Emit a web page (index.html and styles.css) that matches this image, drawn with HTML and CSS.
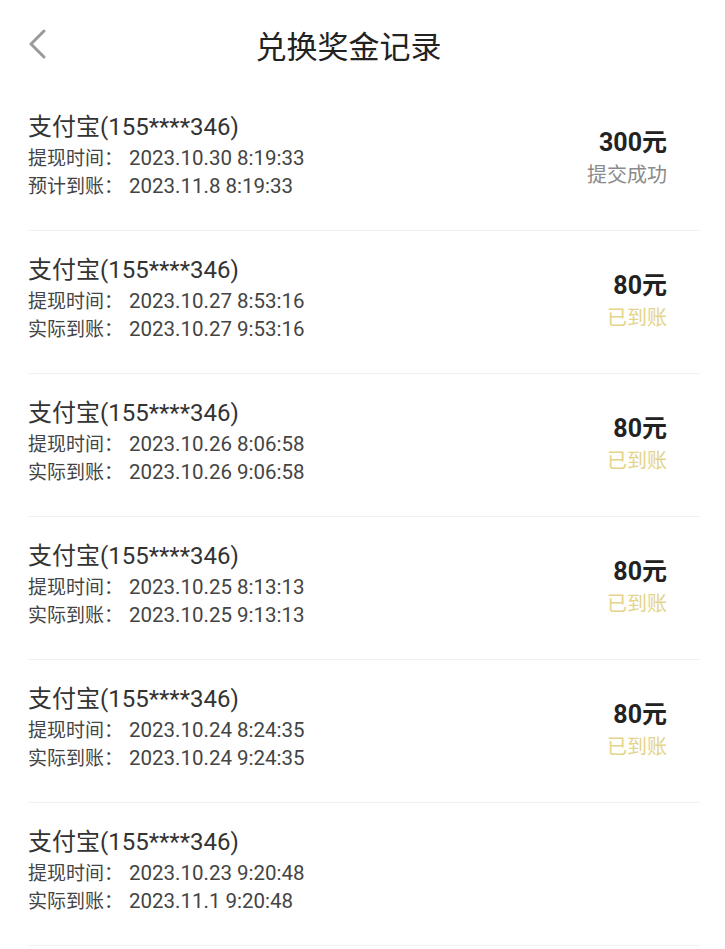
FILE: index.html
```html
<!DOCTYPE html>
<html lang="zh-CN">
<head>
  <meta charset="UTF-8">
  <title>兑换奖金记录</title>
  <link rel="stylesheet" href="styles.css">
</head>
<body>
  <div class="header">
    <svg class="back" width="18" height="30" viewBox="0 0 18 30">
      <polyline points="16,2 3,15 16,28" fill="none" stroke="#9a9a9a" stroke-width="3" stroke-linecap="round" stroke-linejoin="round"/>
    </svg>
    <h1 class="title">兑换奖金记录</h1>
  </div>

  <div class="list">
    <div class="record">
      <div class="info">
        <div class="name">支付宝(155****346)</div>
        <div class="line">提现时间：<span class="val">2023.10.30 8:19:33</span></div>
        <div class="line">预计到账：<span class="val">2023.11.8 8:19:33</span></div>
      </div>
      <div class="side">
        <div class="amount">300元</div>
        <div class="status pending">提交成功</div>
      </div>
    </div>

    <div class="record">
      <div class="info">
        <div class="name">支付宝(155****346)</div>
        <div class="line">提现时间：<span class="val">2023.10.27 8:53:16</span></div>
        <div class="line">实际到账：<span class="val">2023.10.27 9:53:16</span></div>
      </div>
      <div class="side">
        <div class="amount">80元</div>
        <div class="status done">已到账</div>
      </div>
    </div>

    <div class="record">
      <div class="info">
        <div class="name">支付宝(155****346)</div>
        <div class="line">提现时间：<span class="val">2023.10.26 8:06:58</span></div>
        <div class="line">实际到账：<span class="val">2023.10.26 9:06:58</span></div>
      </div>
      <div class="side">
        <div class="amount">80元</div>
        <div class="status done">已到账</div>
      </div>
    </div>

    <div class="record">
      <div class="info">
        <div class="name">支付宝(155****346)</div>
        <div class="line">提现时间：<span class="val">2023.10.25 8:13:13</span></div>
        <div class="line">实际到账：<span class="val">2023.10.25 9:13:13</span></div>
      </div>
      <div class="side">
        <div class="amount">80元</div>
        <div class="status done">已到账</div>
      </div>
    </div>

    <div class="record">
      <div class="info">
        <div class="name">支付宝(155****346)</div>
        <div class="line">提现时间：<span class="val">2023.10.24 8:24:35</span></div>
        <div class="line">实际到账：<span class="val">2023.10.24 9:24:35</span></div>
      </div>
      <div class="side">
        <div class="amount">80元</div>
        <div class="status done">已到账</div>
      </div>
    </div>

    <div class="record">
      <div class="info">
        <div class="name">支付宝(155****346)</div>
        <div class="line">提现时间：<span class="val">2023.10.23 9:20:48</span></div>
        <div class="line">实际到账：<span class="val">2023.11.1 9:20:48</span></div>
      </div>
    </div>
  </div>
</body>
</html>
```

FILE: styles.css
```css
body { margin: 0; background: #fff; color: #333; font-family: Roboto, "Noto Sans CJK SC", sans-serif; }
.header { height: 88px; display: flex; align-items: center; padding: 0 28px; }
.back { flex: none; }
.title { flex: 1; margin: 0; padding-right: 46px; text-align: center; font-size: 31px; font-weight: normal; color: #222; }
.list { display: flex; flex-direction: column; }
.record { display: flex; justify-content: space-between; margin: 0 25px 0 28px; padding: 21px 33px 29px 0; border-bottom: 1px solid #f1f1f1; }
.name { font-size: 24px; line-height: 36px; color: #333; }
.line { height: 28px; font-size: 19px; line-height: 28px; color: #444; }
.val { margin-left: 6px; font-size: 20.5px; line-height: 20px; }
.side { margin-top: 18px; text-align: right; }
.amount { font-size: 25px; line-height: 32px; font-weight: bold; color: #222; }
.status { font-size: 20px; line-height: 32px; }
.pending { color: #8a8a8a; }
.done { color: #e3d48a; }
```
